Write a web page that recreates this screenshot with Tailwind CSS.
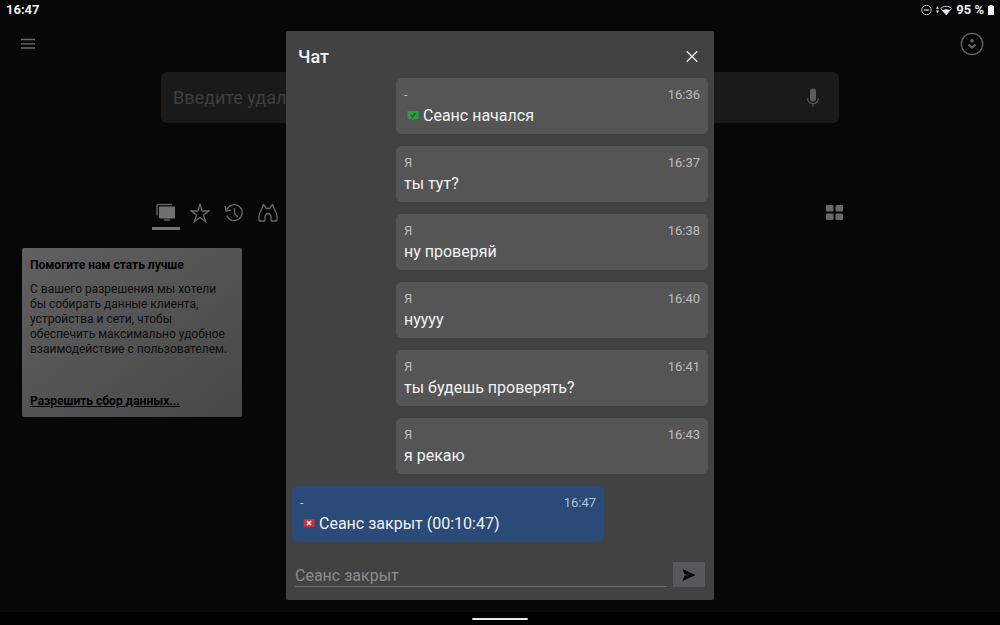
<!DOCTYPE html>
<html lang="ru">
<head>
    <meta charset="UTF-8">
    <meta name="viewport" content="width=device-width, initial-scale=1.0">
    <title>Чат</title>
    <script src="https://cdn.jsdelivr.net/npm/@tailwindcss/browser@4"></script>
</head>
<body class="relative min-h-screen flex flex-col bg-[#070707] font-[Roboto,sans-serif]">

    <!-- Status bar -->
    <div class="flex items-center justify-between h-5 pl-[6px] pr-[6px] text-[13px] leading-5 font-bold text-[#f0f0f0]">
        <span>16:47</span>
        <div class="flex items-center">
            <svg class="w-[11px] h-[11px] mr-1" viewBox="0 0 11 11" fill="none" stroke="#c8c8c8">
                <circle cx="5.5" cy="5" r="4.7"/>
                <path d="M3 5h5" stroke-width="1.4"/>
            </svg>
            <svg class="w-4 h-[11px] mr-1" viewBox="0 0 16 11" fill="#f0f0f0">
                <path d="M0 3.8 1.5 1 3 3.8zM0 5.5 1.5 8.3 3 5.5z"/>
                <path d="M4.8 3.4C8 .6 12.6 .6 15.6 3.4L10.2 9.8z" fill="none" stroke="#d0d0d0"/>
                <path d="M6.5 5.2C9 3.8 11.4 3.8 13.9 5.2L10.2 9.8z"/>
            </svg>
            <span class="mr-1">95 %</span>
            <svg class="w-[6px] h-[11px]" viewBox="0 0 6 11" fill="#f4f4f4">
                <path d="M1.5 0h3v1H6v9H0V1h1.5z"/>
            </svg>
        </div>
    </div>

    <!-- Header -->
    <header class="flex items-center justify-between h-12 pl-5 pr-4">
        <button type="button" aria-label="Меню">
            <svg class="w-4 h-3" viewBox="0 0 16 12" stroke="#6c6c6c" stroke-width="1.3">
                <path d="M1 1.5h14M1 5.8h14M1 10h14"/>
            </svg>
        </button>
        <button type="button" aria-label="Профиль">
            <svg class="w-6 h-6" viewBox="0 0 24 24" fill="none" stroke="#626262">
                <circle cx="12" cy="12" r="10.7" stroke-width="1.3"/>
                <circle cx="12" cy="8.8" r="1.7" fill="#6a6a6a" stroke="none"/>
                <path d="M8.5 12.6 12 15.6 15.5 12.6" stroke-width="2.2"/>
            </svg>
        </button>
    </header>

    <main class="flex-1 pt-1">
        <!-- Search -->
        <div class="mx-[161px] flex items-center h-[51px] pl-3 pr-[18px] rounded-md bg-[#1a1a1a]">
            <input type="text" aria-label="Адрес" placeholder="Введите удаленный адрес" class="flex-1 min-w-0 bg-transparent outline-none text-lg text-[#777] placeholder:text-[#3e3e3e]">
            <button type="button" aria-label="Голосовой ввод">
                <svg class="w-4 h-5" viewBox="0 0 16 20" fill="none" stroke="#5c5c5c">
                    <rect x="5" y="0.5" width="6" height="13" rx="3" fill="#5c5c5c" stroke="none"/>
                    <path d="M2.5 10.5c.3 3.2 2.6 5 5.5 5s5.2-1.8 5.5-5M8 15.5v3" stroke-width="1.2"/>
                </svg>
            </button>
        </div>

        <!-- Tabs -->
        <nav class="mx-[152px] mt-[77px] flex items-start justify-between">
            <div class="flex items-start gap-[6px]">
                <button type="button" aria-label="Сеансы" class="w-7 h-[30px] flex justify-center border-b-[3px] border-[#737373]">
                    <svg class="w-5 h-6" viewBox="0 0 20 24">
                        <path d="M1 15.5V5.5Q1 4.5 2 4.5H16" fill="none" stroke="#626262" stroke-width="1.4"/>
                        <rect x="3" y="6.5" width="16" height="12" rx="1" fill="#707070"/>
                        <path d="M8.5 18.5h5l1 2.5h-7z" fill="#474747"/>
                    </svg>
                </button>
                <button type="button" aria-label="Избранное" class="w-7 flex justify-center">
                    <svg class="w-5 h-[26px]" viewBox="0 0 20 26" fill="none" stroke="#6a6a6a" stroke-width="1.3">
                        <path d="M10 4.5 12.1 11H18.8L13.4 15 15.5 21.5 10 17.5 4.5 21.5 6.6 15 1.2 11H7.9z"/>
                    </svg>
                </button>
                <button type="button" aria-label="Недавние" class="w-7 flex justify-center">
                    <svg class="w-5 h-[26px]" viewBox="0 0 20 26" fill="none" stroke="#6a6a6a" stroke-width="1.3">
                        <path d="M2.8 15.5A8 8 0 1 0 3 9.2L2.3 10.5M1.2 6l.8 5 5-.8M10.5 8v5.5l3.3 3.3"/>
                    </svg>
                </button>
                <button type="button" aria-label="Поиск рядом" class="w-7 flex justify-center">
                    <svg class="w-5 h-[26px]" viewBox="0 0 20 26" fill="none" stroke="#6a6a6a" stroke-width="1.3" stroke-linejoin="round">
                        <path d="M1 20V16.5Q1 14 2.5 11.500L5.500 4.500L8.500 8.500H11.500L14.500 4.500L17.500 11.500Q19 14 19 16.500V20Q19 21 18 21H14Q13 21 13 20V17Q12.500 13.500 10 13.500Q7.500 13.500 7 17V20Q7 21 6 21H2Q1 21 1 20z"/>
                    </svg>
                </button>
            </div>
            <button type="button" aria-label="Вид" class="mr-1 pt-[3px]">
                <svg class="w-5 h-[18px]" viewBox="0 0 20 18" fill="#696969">
                    <rect x="2" y="2" width="7.5" height="6.5" rx="1"/>
                    <rect x="11.5" y="2" width="7.5" height="6.5" rx="1"/>
                    <rect x="2" y="10.5" width="7.5" height="6.5" rx="1"/>
                    <rect x="11.5" y="10.5" width="7.5" height="6.5" rx="1"/>
                </svg>
            </button>
        </nav>

        <!-- Data collection card -->
        <section class="ml-[22px] mt-[18px] w-[220px] h-[169px] flex flex-col px-2 pt-2 pb-[7px] rounded-xs bg-linear-to-br from-[#606060] to-[#474747] text-xs text-[#0e0e0e]">
            <h2 class="font-bold leading-[18px] text-black">Помогите нам стать лучше</h2>
            <p class="mt-2 leading-[15px] whitespace-nowrap">
                С вашего разрешения мы хотели<br>
                бы собирать данные клиента,<br>
                устройства и сети, чтобы<br>
                обеспечить максимально удобное<br>
                взаимодействие с пользователем.
            </p>
            <a href="#" class="mt-auto font-bold leading-[18px] text-black underline">Разрешить сбор данных...</a>
        </section>
    </main>

    <!-- Navigation bar -->
    <footer class="h-[13px] flex justify-center items-center bg-black">
        <div class="w-14 h-[2px] rounded-full bg-[#e8e8e8]"></div>
    </footer>

    <!-- Chat dialog -->
    <div role="dialog" aria-labelledby="chatTitle" class="absolute top-[31px] left-1/2 -translate-x-1/2 w-[428px] flex flex-col rounded-xs bg-[#424242]">
        <div class="flex items-center justify-between h-[47px] pt-1 pl-3 pr-4">
            <h1 id="chatTitle" class="text-lg font-medium text-[#f2f2f2]">Чат</h1>
            <button type="button" aria-label="Закрыть">
                <svg class="w-3 h-3" viewBox="0 0 12 12" stroke="#e6e6e6" stroke-width="1.3">
                    <path d="M.7 .2 11.3 10.8M11.3 .2 .7 10.8"/>
                </svg>
            </button>
        </div>

        <ul class="flex flex-col gap-3 px-[6px] text-base leading-6 text-[#f2f2f2]">
            <li class="self-end w-[312px] h-14 px-2 pt-2 rounded-md bg-[#555]">
                <div class="flex justify-between text-[13px] leading-[18px] text-[#bdbdbd]"><span>-</span><time>16:36</time></div>
                <div class="flex items-center">
                    <svg class="w-3 h-[10px] ml-[3px] mr-1" viewBox="0 0 12 10">
                        <path d="M.5 0h11v8H7.5L6 9.5 4.5 8H.5z" fill="#2e9b40"/>
                        <path d="M3.8 4 5.5 5.7 8.5 2.3" fill="none" stroke="#12591f" stroke-width="1.3"/>
                    </svg>
                    <span>Сеанс начался</span>
                </div>
            </li>
            <li class="self-end w-[312px] h-14 px-2 pt-2 rounded-md bg-[#555]">
                <div class="flex justify-between text-[13px] leading-[18px] text-[#bdbdbd]"><span>Я</span><time>16:37</time></div>
                <p>ты тут?</p>
            </li>
            <li class="self-end w-[312px] h-14 px-2 pt-2 rounded-md bg-[#555]">
                <div class="flex justify-between text-[13px] leading-[18px] text-[#bdbdbd]"><span>Я</span><time>16:38</time></div>
                <p>ну проверяй</p>
            </li>
            <li class="self-end w-[312px] h-14 px-2 pt-2 rounded-md bg-[#555]">
                <div class="flex justify-between text-[13px] leading-[18px] text-[#bdbdbd]"><span>Я</span><time>16:40</time></div>
                <p>нуууу</p>
            </li>
            <li class="self-end w-[312px] h-14 px-2 pt-2 rounded-md bg-[#555]">
                <div class="flex justify-between text-[13px] leading-[18px] text-[#bdbdbd]"><span>Я</span><time>16:41</time></div>
                <p>ты будешь проверять?</p>
            </li>
            <li class="self-end w-[312px] h-14 px-2 pt-2 rounded-md bg-[#555]">
                <div class="flex justify-between text-[13px] leading-[18px] text-[#bdbdbd]"><span>Я</span><time>16:43</time></div>
                <p>я рекаю</p>
            </li>
            <li class="self-start w-[312px] h-14 px-2 pt-2 rounded-md bg-[#2a4a77]">
                <div class="flex justify-between text-[13px] leading-[18px] text-[#b4c3d8]"><span>-</span><time>16:47</time></div>
                <div class="flex items-center">
                    <svg class="w-3 h-[10px] ml-[3px] mr-1" viewBox="0 0 12 10">
                        <path d="M.5 0h11v8H7.5L6 9.5 4.5 8H.5z" fill="#d02c40"/>
                        <path d="M4 2 8 6M8 2 4 6" stroke="#fff" stroke-width="1.4"/>
                    </svg>
                    <span>Сеанс закрыт (00:10:47)</span>
                </div>
            </li>
        </ul>

        <form class="mt-5 flex items-end gap-[6px] pl-[9px] pr-[9px] pb-[13px]">
            <input type="text" aria-label="Сообщение" placeholder="Сеанс закрыт" class="flex-1 min-w-0 h-[25px] pt-[2px] bg-transparent outline-none border-b border-[#6c6c6c] text-base text-[#f2f2f2] placeholder:text-[#8c8c8c]">
            <button type="button" aria-label="Отправить" class="w-8 h-[25px] flex items-center justify-center bg-[#58585a]">
                <svg class="w-[14px] h-3" viewBox="0 0 14 12" fill="#050505">
                    <path d="M.5 0 13.5 6 .5 12 2.5 6.7 8 6 2.5 5.3z"/>
                </svg>
            </button>
        </form>
    </div>
</body>
</html>
